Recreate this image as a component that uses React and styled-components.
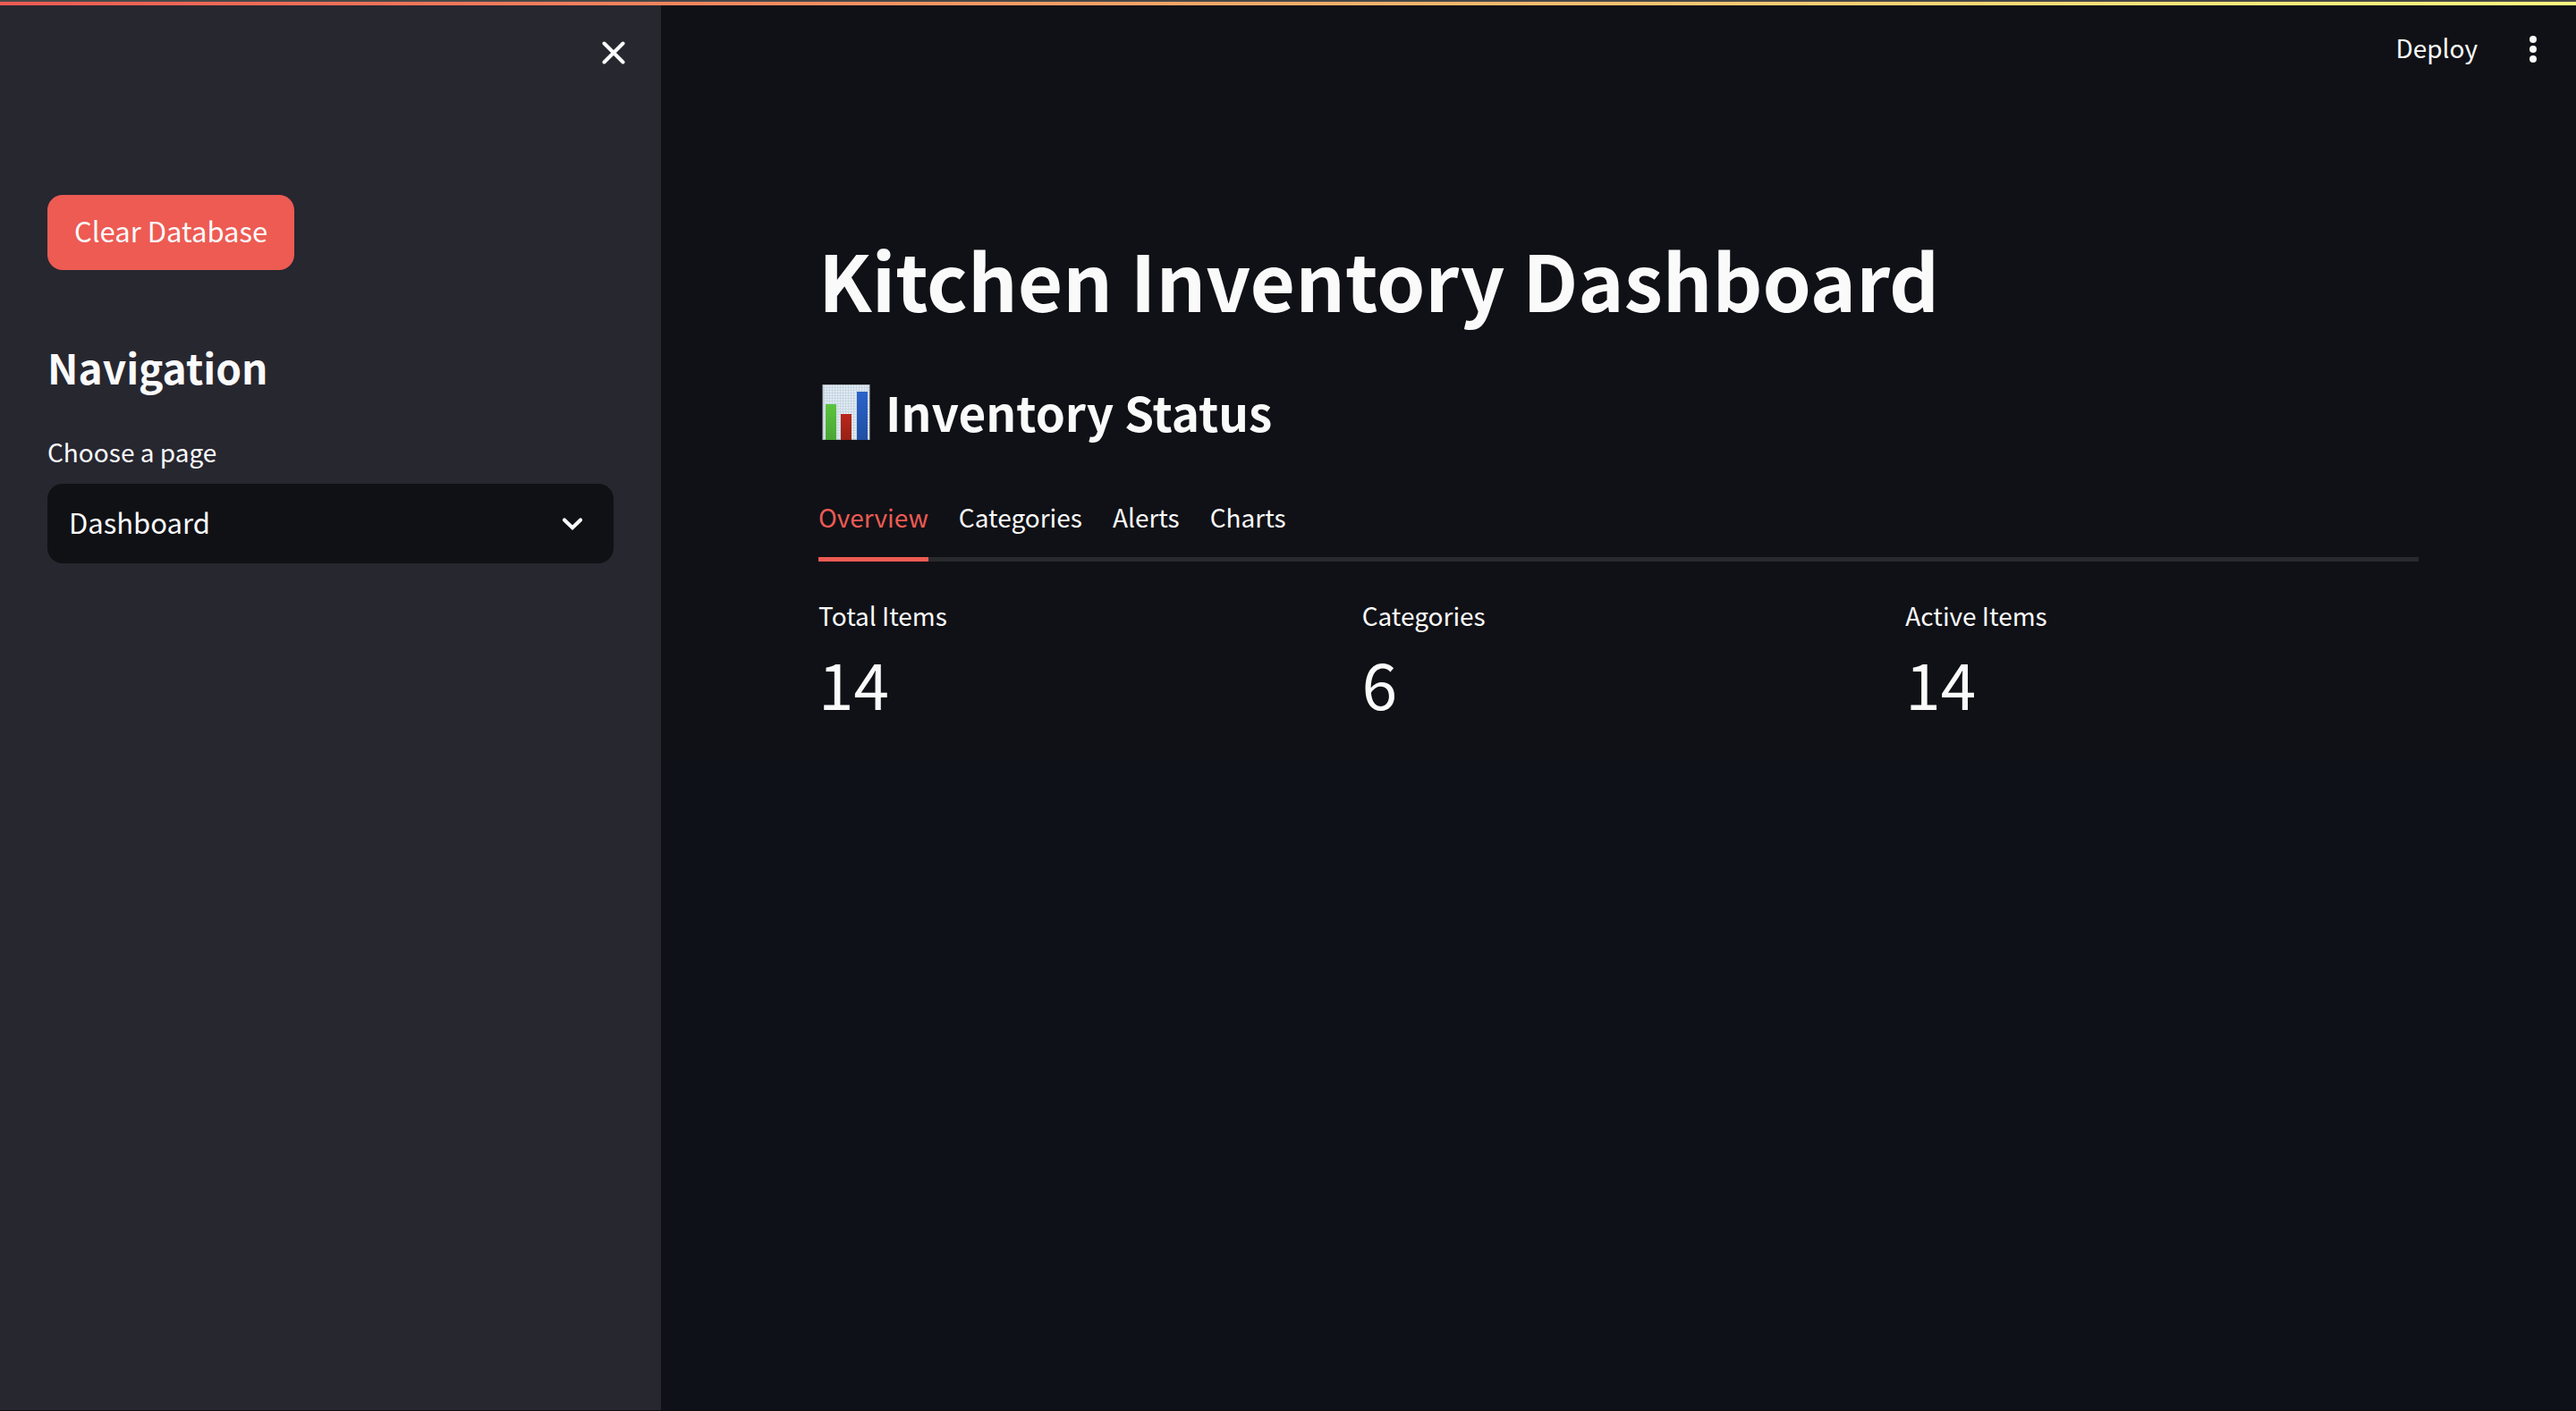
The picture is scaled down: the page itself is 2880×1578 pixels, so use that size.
import React, { useState } from "react";
import styled, { createGlobalStyle } from "styled-components";

const GlobalStyle = createGlobalStyle`
  *, *::before, *::after { box-sizing: border-box; }
  body {
    margin: 0;
    background: #0e1118;
    color: #fafafa;
    font-family: "Source Sans Pro", "Noto Sans CJK JP", "Noto Sans", sans-serif;
    font-size: 28px;
    line-height: 44px;
  }
  h1, h2, p, dl, dd { margin: 0; }
  button, select { font: inherit; color: inherit; }
`;

const Page = styled.div`
  display: flex;
  flex-direction: column;
  min-height: 100vh;
  border-top: 2px solid #484848;
  border-bottom: 1px solid #0f0e13;
`;

const Decoration = styled.div`
  height: 4px;
  background: linear-gradient(90deg, #ed5b53, #fffd80);
`;

const Shell = styled.div`
  display: flex;
  flex: 1;
`;

const Sidebar = styled.aside`
  flex: none;
  width: 739px;
  background: #272730;
`;

const SidebarHeader = styled.div`
  display: flex;
  justify-content: flex-end;
  padding: 27px 27px 0;
`;

const IconButton = styled.button`
  display: grid;
  place-items: center;
  width: 52px;
  height: 52px;
  padding: 0;
  border: 0;
  background: none;
  cursor: pointer;
`;

const SidebarBody = styled.div`
  display: flex;
  flex-direction: column;
  align-items: flex-start;
  padding: 133px 53px 0;
`;

const PrimaryButton = styled.button`
  padding: 14px 30px 18px;
  border: 0;
  border-radius: 17px;
  background: #ed5b53;
  font-size: 31px;
  line-height: 52px;
  cursor: pointer;
`;

const SidebarTitle = styled.h2`
  margin-top: 76px;
  font-size: 46px;
  line-height: 64px;
  font-weight: 700;
`;

const Field = styled.div`
  display: flex;
  flex-direction: column;
  gap: 14px;
  width: 100%;
  margin-top: 41px;
`;

const SelectBox = styled.div`
  display: grid;
  align-items: center;

  > * { grid-area: 1 / 1; }
  > svg {
    justify-self: end;
    margin-right: 34px;
    pointer-events: none;
  }
`;

const Select = styled.select`
  appearance: none;
  width: 100%;
  height: 89px;
  padding: 0 80px 4px 24px;
  border: 0;
  border-radius: 17px;
  background: #101115;
  font-size: 31px;
`;

const Main = styled.main`
  flex: 1;
  min-width: 0;
  background: linear-gradient(#101116 0 844px, #0e1118 844px);
`;

const Toolbar = styled.header`
  display: flex;
  align-items: center;
  justify-content: flex-end;
  gap: 36px;
  height: 113px;
  padding: 0 22px 16px;
`;

const TextButton = styled.button`
  padding: 0 0 3px;
  border: 0;
  background: none;
  cursor: pointer;
`;

const Content = styled.div`
  padding: 134px 176px 0;
`;

const Title = styled.h1`
  font-size: 87px;
  line-height: 116px;
  font-weight: 700;
`;

const Heading = styled.h2`
  display: flex;
  align-items: center;
  gap: 15px;
  margin-top: 54px;
  font-size: 53px;
  line-height: 74px;
  font-weight: 700;
`;

const TabList = styled.div`
  display: flex;
  gap: 34px;
  margin-top: 59px;
  box-shadow: inset 0 -5px #292a2e;
`;

const Tab = styled.button`
  padding: 0 0 23px;
  border: 0;
  border-bottom: 5px solid ${(p) => (p.$active ? "#ed5b53" : "transparent")};
  background: none;
  color: ${(p) => (p.$active ? "#ed5b53" : "inherit")};
  cursor: pointer;
`;

const Metrics = styled.dl`
  display: grid;
  grid-template-columns: repeat(3, 1fr);
  gap: 34px;
  padding-top: 38px;
`;

const MetricValue = styled.dd`
  margin-top: 5px;
  font-size: 71px;
  line-height: 96px;
`;

const CloseIcon = () => (
  <svg width="26" height="26" viewBox="0 0 26 26" fill="none" stroke="#fff" strokeWidth="4" strokeLinecap="round" aria-hidden="true">
    <path d="M2.5 2.5l21 21M23.5 2.5l-21 21" />
  </svg>
);

const ChevronIcon = () => (
  <svg width="24" height="16" viewBox="0 0 24 16" fill="none" stroke="#fafafa" strokeWidth="4.2" strokeLinecap="round" aria-hidden="true">
    <path d="M3 3.5l9 8.7 9-8.7" />
  </svg>
);

const DotsIcon = () => (
  <svg width="8" height="32" viewBox="0 0 8 32" fill="#fafafa" aria-hidden="true">
    <circle cx="4" cy="5" r="4" />
    <circle cx="4" cy="16" r="4" />
    <circle cx="4" cy="27" r="4" />
  </svg>
);

const ChartIcon = () => (
  <svg width="60" height="64" viewBox="0 -2 60 64" aria-hidden="true">
    <defs>
      <pattern id="grid" width="3" height="3" patternUnits="userSpaceOnUse">
        <rect width="3" height="3" fill="#e3ebf1" />
        <path d="M0 .5h3M.5 0v3" stroke="#c6d7e4" />
      </pattern>
      <linearGradient id="green" x2="0" y2="1">
        <stop stopColor="#5cc43f" />
        <stop offset="1" stopColor="#4aa535" />
      </linearGradient>
      <linearGradient id="red" x2="0" y2="1">
        <stop stopColor="#b9281b" />
        <stop offset="1" stopColor="#962015" />
      </linearGradient>
      <linearGradient id="blue" x2="0" y2="1">
        <stop stopColor="#2a63cb" />
        <stop offset="1" stopColor="#204fa3" />
      </linearGradient>
    </defs>
    <rect x="4.5" width="53" height="62" fill="#b4bac0" />
    <rect x="5.5" y="1" width="51" height="60" fill="url(#grid)" />
    <rect x="8" y="22" width="12" height="40" fill="url(#green)" />
    <rect x="25" y="33" width="12" height="29" fill="url(#red)" />
    <rect x="43" y="8" width="12" height="54" fill="url(#blue)" />
  </svg>
);

const tabs = ["Overview", "Categories", "Alerts", "Charts"];
const metrics = [
  { label: "Total Items", value: 14 },
  { label: "Categories", value: 6 },
  { label: "Active Items", value: 14 },
];

export default function App() {
  const [activeTab, setActiveTab] = useState("Overview");

  return (
    <>
      <GlobalStyle />
      <Page>
        <Decoration />
        <Shell>
          <Sidebar>
            <SidebarHeader>
              <IconButton type="button" aria-label="Close sidebar">
                <CloseIcon />
              </IconButton>
            </SidebarHeader>
            <SidebarBody>
              <PrimaryButton type="button">Clear Database</PrimaryButton>
              <SidebarTitle>Navigation</SidebarTitle>
              <Field>
                <label htmlFor="page">Choose a page</label>
                <SelectBox>
                  <Select id="page" defaultValue="Dashboard">
                    <option>Dashboard</option>
                  </Select>
                  <ChevronIcon />
                </SelectBox>
              </Field>
            </SidebarBody>
          </Sidebar>
          <Main>
            <Toolbar>
              <TextButton type="button">Deploy</TextButton>
              <IconButton type="button" aria-label="Main menu">
                <DotsIcon />
              </IconButton>
            </Toolbar>
            <Content>
              <Title>Kitchen Inventory Dashboard</Title>
              <Heading>
                <ChartIcon />
                Inventory Status
              </Heading>
              <TabList role="tablist">
                {tabs.map((tab) => (
                  <Tab
                    key={tab}
                    type="button"
                    role="tab"
                    aria-selected={tab === activeTab}
                    $active={tab === activeTab}
                    onClick={() => setActiveTab(tab)}
                  >
                    {tab}
                  </Tab>
                ))}
              </TabList>
              <Metrics>
                {metrics.map((metric) => (
                  <div key={metric.label}>
                    <dt>{metric.label}</dt>
                    <MetricValue>{metric.value}</MetricValue>
                  </div>
                ))}
              </Metrics>
            </Content>
          </Main>
        </Shell>
      </Page>
    </>
  );
}
